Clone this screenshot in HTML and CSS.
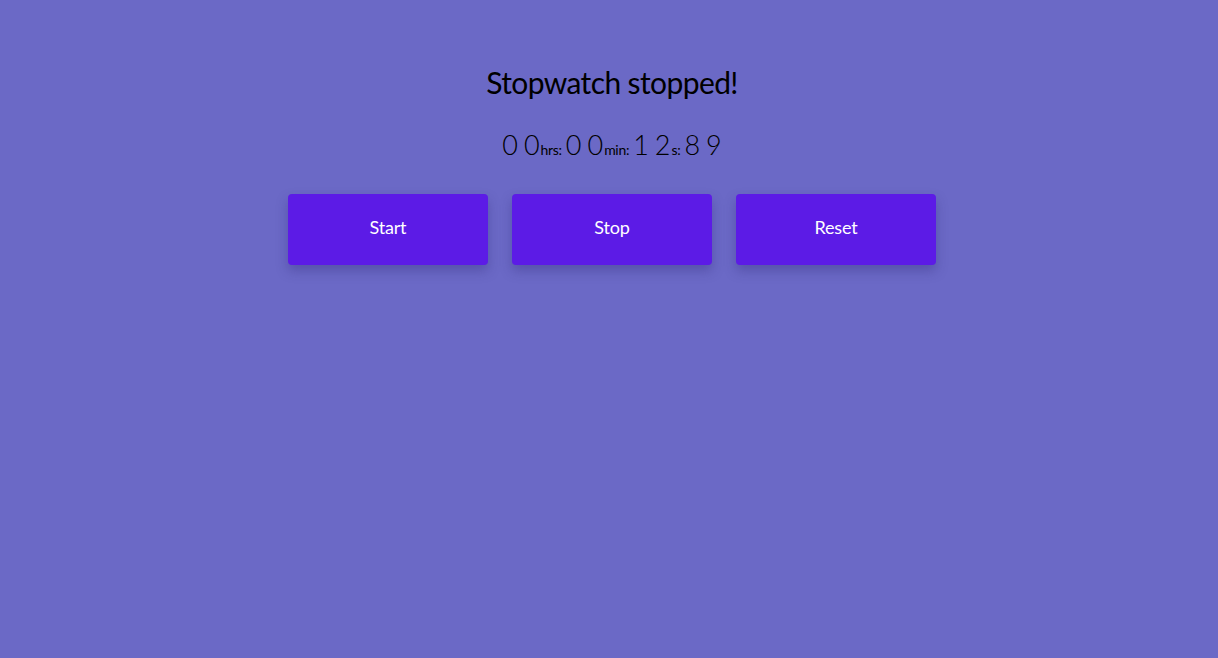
FILE: index.html
```html
<!DOCTYPE html>
<html>
<head>
<meta charset="utf-8">
<link rel="stylesheet" href="styles.css">
</head>
<body>
<main class="app">
  <h1 class="title">Stopwatch stopped!</h1>
  <div class="time">
    <span class="digits"><span>0</span><span>0</span></span><span class="unit">hrs:</span>
    <span class="digits"><span>0</span><span>0</span></span><span class="unit">min:</span>
    <span class="digits"><span>1</span><span>2</span></span><span class="unit">s:</span>
    <span class="digits"><span>8</span><span>9</span></span>
  </div>
  <div class="buttons">
    <button class="btn">Start</button>
    <button class="btn">Stop</button>
    <button class="btn">Reset</button>
  </div>
</main>
</body>
</html>
```
FILE: styles.css
```css
html, body {
  margin: 0;
  height: 100%;
}
body {
  background: #6b69c6;
  font-family: "Lato", "Open Sans", sans-serif;
  color: #000;
}
.app {
  display: flex;
  flex-direction: column;
  align-items: center;
  padding-top: 62px;
  padding-left: 6px;
}
.title {
  margin: 0;
  font-weight: 400;
  font-size: 30px;
  line-height: 40px;
  letter-spacing: -0.6px;
}
.time {
  margin-top: 26px;
  display: flex;
  align-items: baseline;
  line-height: 34px;
}
.digits {
  display: flex;
  gap: 6px;
  font-family: "Lato", sans-serif;
  font-weight: 300;
  font-size: 27px;
}
.unit {
  font-size: 14px;
  margin: 0 4px 0 1px;
  letter-spacing: -0.3px;
}
.buttons {
  margin-top: 27px;
  display: flex;
  gap: 24px;
}
.btn {
  width: 200px;
  height: 71px;
  padding: 0 0 5px;
  border: none;
  border-radius: 4px;
  background: #5c1be6;
  color: #fff;
  font-family: "Lato", "Open Sans", sans-serif;
  font-size: 18px;
  letter-spacing: -0.2px;
  box-shadow: 0 6px 12px rgba(50, 40, 120, 0.35);
  cursor: pointer;
}
```
